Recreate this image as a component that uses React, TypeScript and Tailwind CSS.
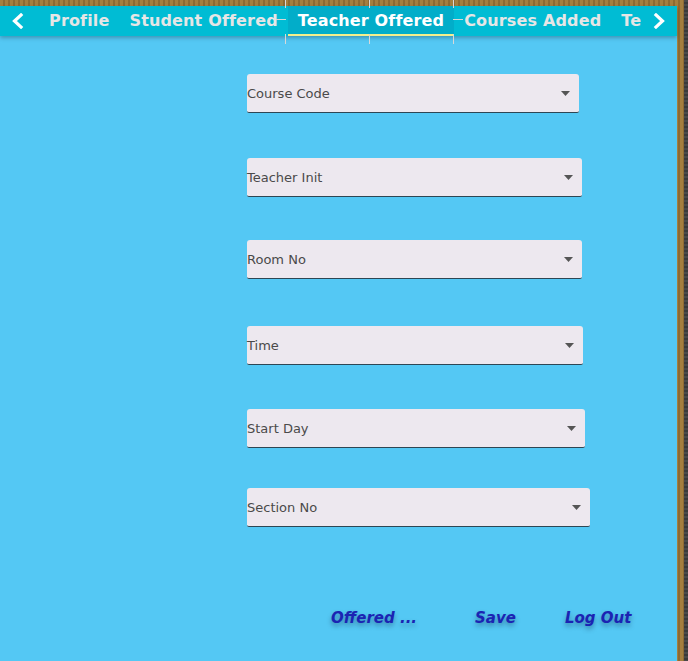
import React from "react";

const tabs = ["Profile", "Student Offered", "Teacher Offered", "Courses Added", "Teachers"];

const fields: { label: string; width: number; mt: number }[] = [
  { label: "Course Code", width: 332, mt: 38 },
  { label: "Teacher Init", width: 335, mt: 45 },
  { label: "Room No", width: 335, mt: 43 },
  { label: "Time", width: 336, mt: 47 },
  { label: "Start Day", width: 338, mt: 44 },
  { label: "Section No", width: 343, mt: 40 },
];

function Combo({ label, width, mt }: { label: string; width: number; mt: number }) {
  return (
    <div
      className="h-[39px] bg-[#ede8ef] rounded-t-[3px] rounded-b-[2px] border-b border-[#2e4654] flex items-center justify-between pr-[9px]"
      style={{ width, marginTop: mt }}
    >
      <span className="text-[13px] text-[#4a4a4a] font-['DejaVu_Sans',sans-serif] leading-none">{label}</span>
      <svg width="9" height="5" viewBox="0 0 9 5">
        <polygon points="0,0 9,0 4.5,5" fill="#555555" />
      </svg>
    </div>
  );
}

export default function App() {
  return (
    <div className="w-[688px] h-[661px] flex overflow-hidden bg-[repeating-linear-gradient(90deg,#a47f3f_0px,#a47f3f_3px,#8d6a33_3px,#8d6a33_5px)]">
      <div className="w-[677px] flex flex-col">
        <div className="h-[6px] shrink-0" />
        <div className="flex-1 bg-[#54c8f4] flex flex-col relative">
          {/* tab bar */}
          <div className="h-[30px] bg-[#00bcd4] flex items-stretch shadow-[0_2px_4px_rgba(0,0,0,0.25)] relative z-10 font-['DejaVu_Sans',sans-serif] font-bold text-[16px] tracking-[0.15px]">
            <div className="w-[39px] flex items-center pl-[11px]">
              <svg width="14" height="16" viewBox="0 0 14 16">
                <polyline points="10,2 3.5,8 10,14" fill="none" stroke="white" strokeWidth="3.2" strokeLinecap="square" />
              </svg>
            </div>
            <div className="w-[602px] flex overflow-hidden">
              {tabs.map((t) => {
                const sel = t === "Teacher Offered";
                return (
                  <div
                    key={t}
                    className={
                      "px-[10px] flex items-center whitespace-nowrap shrink-0 " +
                      (sel
                        ? "bg-[#02adc9] text-white border-b-2 border-[#f4ef8c] pt-[2px]"
                        : "text-[#e6e6e6]")
                    }
                  >
                    {t}
                  </div>
                );
              })}
            </div>
            <div className="flex-1 flex items-center pl-[11px]">
              <svg width="14" height="16" viewBox="0 0 14 16">
                <polyline points="4,2 10.5,8 4,14" fill="none" stroke="white" strokeWidth="3.2" strokeLinecap="square" />
              </svg>
            </div>
          </div>

          {/* selection markers */}
          <div className="absolute left-[285px] top-[-6px] w-px h-[8px] bg-[#d8d8d8] z-20" />
          <div className="absolute left-[369px] top-[-6px] w-px h-[8px] bg-[#d8d8d8] z-20" />
          <div className="absolute left-[453px] top-[-6px] w-px h-[8px] bg-[#d8d8d8] z-20" />
          <div className="absolute left-[285px] top-[28px] w-px h-[10px] bg-[#d8d8d8] z-20" />
          <div className="absolute left-[369px] top-[28px] w-px h-[10px] bg-[#d8d8d8] z-20" />
          <div className="absolute left-[453px] top-[28px] w-px h-[10px] bg-[#d8d8d8] z-20" />
          <div className="absolute left-[276px] top-[13px] w-[10px] h-px bg-[#d8d8d8] z-20" />
          <div className="absolute left-[453px] top-[13px] w-[10px] h-px bg-[#d8d8d8] z-20" />

          {/* form */}
          <div className="flex flex-col pl-[247px]">
            {fields.map((f) => (
              <Combo key={f.label} {...f} />
            ))}
          </div>

          {/* buttons */}
          <div className="flex items-center pl-[331px] mt-[80px] font-['DejaVu_Sans',sans-serif] font-bold italic text-[15px] text-[#1b24b3] [text-shadow:0_3px_5px_rgba(0,0,40,0.35)]">
            <span>Offered ...</span>
            <span className="ml-[58px]">Save</span>
            <span className="ml-[49px]">Log Out</span>
          </div>
        </div>
      </div>
      <div className="w-[7px]" />
      <div className="w-[4px] bg-[repeating-linear-gradient(180deg,#4a4a4a_0px,#4a4a4a_2px,#3a3a3a_2px,#3a3a3a_4px)]" />
    </div>
  );
}
